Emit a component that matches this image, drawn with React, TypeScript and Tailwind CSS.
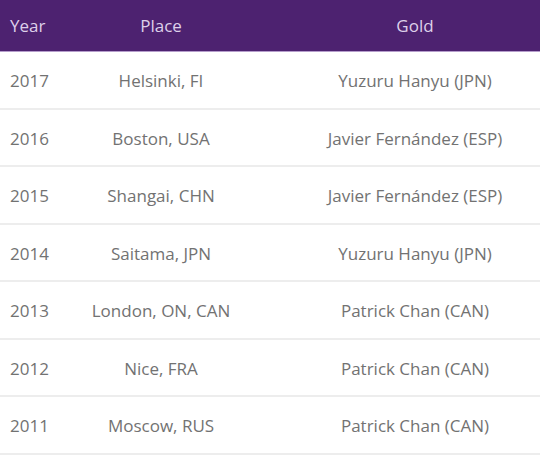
const ROWS = [
	{ year: '2017', place: 'Helsinki, FI', gold: 'Yuzuru Hanyu (JPN)' },
	{ year: '2016', place: 'Boston, USA', gold: 'Javier Fernández (ESP)' },
	{ year: '2015', place: 'Shangai, CHN', gold: 'Javier Fernández (ESP)' },
	{ year: '2014', place: 'Saitama, JPN', gold: 'Yuzuru Hanyu (JPN)' },
	{ year: '2013', place: 'London, ON, CAN', gold: 'Patrick Chan (CAN)' },
	{ year: '2012', place: 'Nice, FRA', gold: 'Patrick Chan (CAN)' },
	{ year: '2011', place: 'Moscow, RUS', gold: 'Patrick Chan (CAN)' },
];

export default function App() {
	return (
		<div className="w-[540px] h-[457px] overflow-hidden bg-white font-['Open_Sans',sans-serif]">
			<div className="grid h-[52px] grid-cols-[54px_214px_272px] items-center bg-[#4d2270] border-b border-[#b59dcb] text-[17px] text-[#ded0ea]">
				<div className="pl-[10px]">Year</div>
				<div className="text-center">Place</div>
				<div className="pl-[22px] text-center">Gold</div>
			</div>
			{ROWS.map((row) => (
				<div
					key={row.year}
					className="grid h-[57.5px] grid-cols-[54px_214px_272px] items-center border-b-2 border-[#ededed] pt-[2px] text-[17px] text-[#727272]"
				>
					<div className="pl-[10px]">{row.year}</div>
					<div className="text-center">{row.place}</div>
					<div className="pl-[22px] text-center">{row.gold}</div>
				</div>
			))}
		</div>
	);
}
